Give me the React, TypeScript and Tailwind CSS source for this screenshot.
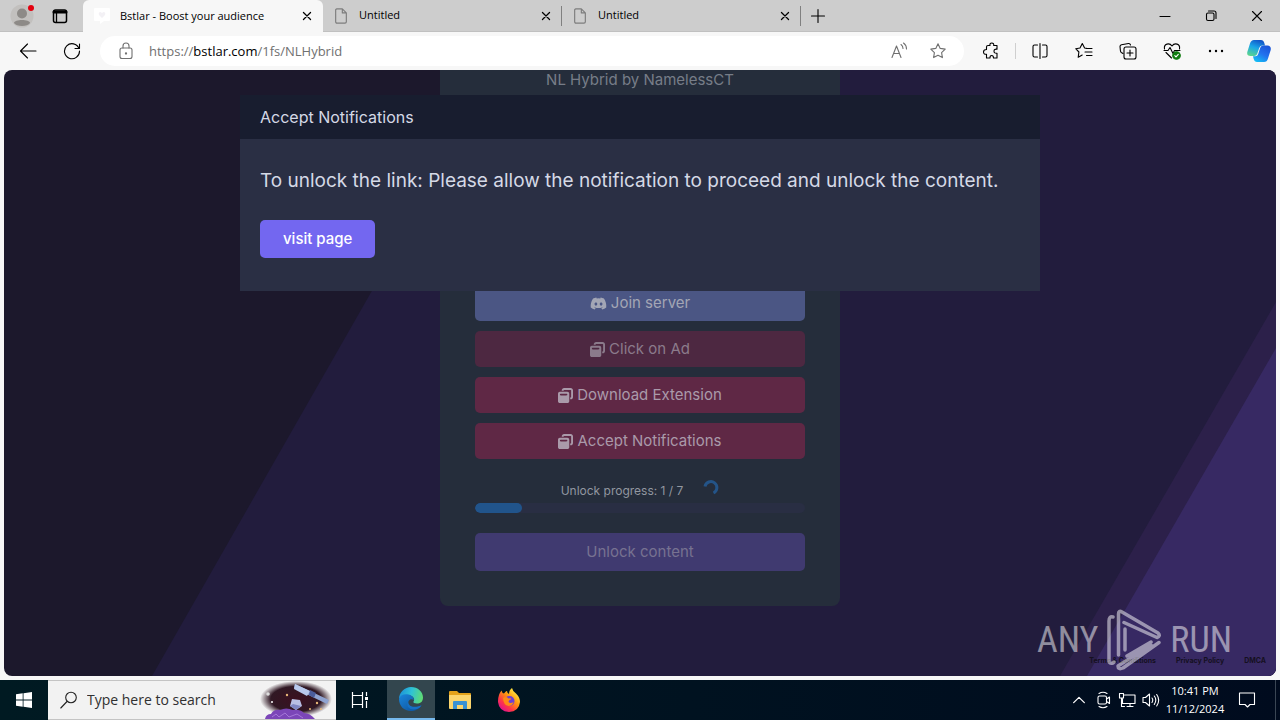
import React, { useState } from "react";
import { FaDiscord, FaWindowRestore } from "react-icons/fa6";

type IconProps = { size?: number; className?: string; children: React.ReactNode };

const Line = ({ size = 18, className = "", children }: IconProps) => (
  <svg
    width={size}
    height={size}
    viewBox="0 0 18 18"
    fill="none"
    stroke="currentColor"
    strokeWidth="1.1"
    strokeLinecap="round"
    strokeLinejoin="round"
    className={`shrink-0 ${className}`}
  >
    {children}
  </svg>
);

const starPath = "M9 1.8l2.2 4.6 5 .7-3.6 3.5.8 5L9 13.200l-4.400 2.400.8-5L1.800 7.100l5-.7z";

const CloseIcon = () => (
  <Line size={16}>
    <path d="M5 5l8 8M13 5l-8 8" strokeWidth="1.400" />
  </Line>
);

const FileIcon = () => (
  <Line size={16} className="text-[#7d7d7d]">
    <path d="M4 1h6.500l4.500 4.500V15.500q0 1.500-1.500 1.500h-9q-1.500 0-1.500-1.500V2.500Q3 1 4.500 1M10.500 1v4.500H15" strokeWidth="1.300" />
  </Line>
);

const tools = [
  {
    id: 1,
    label: "Split screen",
    icon: (
      <Line>
        <path d="M6.500 3H3.500Q2 3 2 4.500v9Q2 15 3.500 15h3M11.500 3h3Q16 3 16 4.500v9q0 1.500-1.500 1.500h-3M9 1.500v15" />
      </Line>
    ),
  },
  {
    id: 2,
    label: "Favorites",
    icon: (
      <Line>
        <path d="M11.500 6.300L9.600 6 7.300 1.600 5 6l-4.300.7 3.200 3.300-.7 5.200 4-2.200M11 6.500h6M10 10h7M11.500 13.500H17" />
      </Line>
    ),
  },
  {
    id: 3,
    label: "Collections",
    icon: (
      <Line>
        <path d="M4 11.500L2.300 10.500Q1.500 10 1.400 8.500L1 4.500Q1 3 2.500 2.700l7-1.200Q11 1.300 11.500 3" />
        <rect x="5" y="5" width="12" height="12" rx="2" />
        <path d="M11 8v6M8 11h6" />
      </Line>
    ),
  },
  {
    id: 4,
    label: "Browser essentials",
    icon: (
      <Line>
        <path d="M1.500 7C.5 1.500 6.500.500 9 4c2.500-3.500 8.500-2.500 7.500 3M1 8.500h4L7 5.500l3 6 1.500-3H17M3 10.500L8.500 16" />
        <circle cx="13.500" cy="13.500" r="3.800" fill="#107c10" stroke="#107c10" />
        <path d="M11.800 13.600l1.200 1.200 2.300-2.500" stroke="white" />
      </Line>
    ),
  },
  {
    id: 5,
    label: "Settings and more",
    icon: (
      <svg width="18" height="18" viewBox="0 0 18 18">
        <circle cx="3" cy="9" r="1.200" />
        <circle cx="9" cy="9" r="1.200" />
        <circle cx="15" cy="9" r="1.200" />
      </svg>
    ),
  },
];

const tasks = [
  { id: 1, label: "Click on Ad", style: "bg-[#4d2841] text-[#8b7b8b]" },
  { id: 2, label: "Download Extension", style: "bg-[#5f2845] text-[#aa9aaa]" },
  { id: 3, label: "Accept Notifications", style: "bg-[#5f2845] text-[#aa9aaa]" },
];

function Tabs() {
  return (
    <header className="flex h-8 items-stretch border-b border-[#c0c0c0] bg-[#cdcdcd] text-[11px] text-black">
      <button aria-label="Profile" className="flex w-11 items-center justify-center">
        <svg width="24" height="24" viewBox="0 0 24 24">
          <circle cx="12" cy="12" r="11.500" fill="#c2c0be" />
          <circle cx="12" cy="9.500" r="5" fill="#8d8a87" />
          <path d="M4 19c0-4 16-4 16 0-2 4-14 4-16 0z" fill="#8d8a87" />
          <circle cx="21" cy="4" r="3" fill="#e3000f" />
        </svg>
      </button>
      <button aria-label="Tab actions" className="mr-[7px] flex w-8 items-center justify-center">
        <Line size={18}>
          <rect x="2.500" y="3" width="13" height="12.500" rx="2" strokeWidth="1.500" />
          <path d="M3 5h12" strokeWidth="3" />
          <path d="M5.500 6v9" strokeWidth="1.300" />
        </Line>
      </button>

      <div className="-mb-px flex w-60 items-center rounded-t-md bg-[#f7f7f7] pl-[11px] pr-2">
        <svg width="16" height="16" viewBox="0 0 16 16" className="mr-[10px] shrink-0">
          <path d="M1 0h14q1 0 1 1v11q0 1-1 1h-5l-4 3v-3H1q-1 0-1-1V1q0-1 1-1z" fill="white" />
          <path d="M8 10L5 7q-1-3 1.500-3L8 5l1.500-1Q12 4 11 7z" fill="#f3f1f5" />
        </svg>
        <span className="flex-1 truncate">Bstlar - Boost your audience</span>
        <button aria-label="Close tab"><CloseIcon /></button>
      </div>
      {[1, 2].map((tab) => (
        <div key={tab} className="flex w-[239px] items-center pl-[10px]">
          <span className="mr-[10px]"><FileIcon /></span>
          <span className="flex-1">Untitled</span>
          <button aria-label="Close tab"><CloseIcon /></button>
          <span className="ml-[7px] h-5 w-px bg-[#808080]" />
        </div>
      ))}
      <button aria-label="New tab" className="flex w-[34px] items-center justify-center">
        <Line><path d="M9 2.500v13M2.500 9h13" /></Line>
      </button>

      <div className="ml-auto flex">
        <button aria-label="Minimize" className="flex w-[46px] items-center justify-center">
          <Line><path d="M4 9.500h10" /></Line>
        </button>
        <button aria-label="Restore" className="flex w-[46px] items-center justify-center">
          <Line>
            <rect x="4.500" y="6" width="7.500" height="7.500" rx="1.500" />
            <path d="M6.500 4h5.500q2 0 2 2v5.500" />
          </Line>
        </button>
        <button aria-label="Close" className="flex w-[46px] items-center justify-center">
          <Line><path d="M4.500 4.500l9 9M13.500 4.500l-9 9" /></Line>
        </button>
      </div>
    </header>
  );
}

function Toolbar() {
  const [editing, setEditing] = useState<boolean>(false);
  return (
    <div className="flex h-[38px] items-center bg-[#f7f7f7] pl-1.5 text-black">
      <button aria-label="Back" className="flex w-11 justify-center">
        <Line><path d="M17 9H1.500M8.500 2L1.500 9l7 7" /></Line>
      </button>
      <button aria-label="Refresh" className="flex w-11 justify-center">
        <Line><path d="M16 6.500A7.500 7.500 0 1 0 16.500 9M16.500 2v4.500H12" /></Line>
      </button>

      <div className="relative ml-1.5 mr-[5px] flex h-[30px] flex-1 items-center rounded-full bg-white pl-[17px] pr-[17px] text-[#707070]">
        <Line>
          <rect x="3" y="6" width="12" height="10.500" rx="2" />
          <path d="M6 6V4q0-3 3-3t3 3v2" />
          <circle cx="9" cy="11.500" r=".6" fill="currentColor" />
        </Line>
        {!editing && (
          <label htmlFor="address" className="pointer-events-none absolute left-[49px] text-[13px] leading-5">
            https://<span className="text-black">bstlar.com</span>/1fs/NLHybrid
          </label>
        )}
        <input
          id="address"
          aria-label="Address"
          className="ml-[14px] min-w-0 flex-1 bg-transparent text-[13px] outline-none"
          value={editing ? "https://bstlar.com/1fs/NLHybrid" : ""}
          onFocus={() => setEditing(true)}
          onBlur={() => setEditing(false)}
          readOnly
        />
        <button aria-label="Read aloud" className="mr-[21px]">
          <Line>
            <path d="M2 15.500L6.500 4 11 15.500M3.500 11.500h6M11 2.500q2 1.500 2 4M13.500 1q3 2 3 6" />
          </Line>
        </button>
        <button aria-label="Add to favorites">
          <Line><path d={starPath} /></Line>
        </button>
      </div>

      <button aria-label="Extensions" className="flex w-11 justify-center">
        <Line>
          <path d="M6 3.500h2Q7.500 1 9.800 1t1.900 2.500H15v3.700q-3-.3-3 2t3 2V16h-3.500Q11.500 13.500 9.700 13.500T8 16H4.500v-3.700Q1.500 12.500 1.500 10T4.500 7.500v-2.500q0-1.500 1.500-1.500z" />
        </Line>
      </button>
      <span className="mx-0.5 h-4 w-px bg-[#cfcfcf]" />
      {tools.map((tool) => (
        <button key={tool.id} aria-label={tool.label} className="flex w-11 justify-center">
          {tool.icon}
        </button>
      ))}
      <button aria-label="Copilot" className="flex w-[42px] justify-center">
        <svg width="24" height="22" viewBox="0 0 24 22">
          <defs>
            <linearGradient id="cpA" x1="0.600" y1="0" x2="0.200" y2="1">
              <stop offset="0" stopColor="#1256c8" />
              <stop offset=".45" stopColor="#1aa5e8" />
              <stop offset="1" stopColor="#5cd68c" />
            </linearGradient>
            <linearGradient id="cpB" x1="0.800" y1="0" x2="0.200" y2="1">
              <stop offset="0" stopColor="#1a53d8" />
              <stop offset=".5" stopColor="#2272ee" />
              <stop offset="1" stopColor="#14c0f5" />
            </linearGradient>
          </defs>
          <path d="M7 0h7q2.500 0 3.300 3l.7 2.500h-3q-2 0-2.800 2.500L10.500 13q-.8 3-3.500 3H3.500Q-.5 16 .3 12L3 3.500Q4 0 7 0z" fill="url(#cpA)" />
          <path d="M17 22h-7q-2.500 0-3.300-3L6 16.300h2.500q2 0 2.800-2.500L13 8.500q.8-3 3.500-3h4Q24.500 6 23.700 10L21 18.500Q20 22 17 22z" fill="url(#cpB)" />
        </svg>
      </button>
    </div>
  );
}

function UnlockCard() {
  return (
    <section className="relative mx-auto w-full max-w-[400px] rounded-b-lg bg-[#252d3b] px-[35px] pb-[35px] text-center text-[15px]">
      <h1 className="leading-5 text-[#777d88]">NL Hybrid by NamelessCT</h1>

      {/* TASKS */}

      <div className="mt-[195px] flex flex-col gap-[10px]">
        <button className="flex h-9 items-center justify-center gap-1 rounded-[5px] bg-[#4b5684] text-[#a3a6b5]">
          <FaDiscord size={17} />Join server
        </button>
        {tasks.map((task) => (
          <button key={task.id} className={`flex h-9 items-center justify-center gap-1 rounded-[5px] ${task.style}`}>
            <FaWindowRestore size={15} />{task.label}
          </button>
        ))}
      </div>

      {/* PROGRESS */}

      <div className="mt-5 flex h-6 items-center justify-center gap-5 text-xs text-[#9297a0]">
        <span>Unlock progress: 1 / 7</span>
        <svg width="16" height="16" viewBox="0 0 16 16" fill="none" stroke="#245488" strokeWidth="3" className="self-start">
          <path d="M2 7.500A6 6 0 1 1 10.500 14" />
        </svg>
      </div>
      <div className="h-[10px] overflow-hidden rounded-full bg-[#292e43]">
        <div className="h-full w-1/7 rounded-full bg-[#21548b]" />
      </div>
      <button className="mt-5 h-[38px] w-full rounded-[5px] bg-[#403a70] text-[#777291]">Unlock content</button>
    </section>
  );
}

function Modal() {
  return (
    <div role="dialog" aria-labelledby="modal-title" className="absolute inset-x-0 top-[25px] mx-auto max-w-[800px] bg-[#2a2f44] text-[#d5d9e6]">
      <h2 id="modal-title" className="bg-[#181d2f] px-5 py-3 text-base leading-5">Accept Notifications</h2>
      <div className="px-5 pb-[33px] pt-7">
        <p className="text-[19px] leading-7">
          To unlock the link: Please allow the notification to proceed and unlock the content.
        </p>
        <button className="mt-[25px] h-[38px] rounded-[5px] bg-[#7367f0] px-[23px] text-[15px] font-medium text-white">
          visit page
        </button>
      </div>
    </div>
  );
}

function Watermark() {
  return (
    <div className="pointer-events-none absolute bottom-[5px] right-11 flex items-center gap-2 font-['Roboto_Condensed','Liberation_Sans_Narrow','Liberation_Sans',sans-serif] text-[36px] leading-10 text-white/50">
      <span>ANY</span>
      <svg width="56" height="62" viewBox="0 0 56 62" fill="none" stroke="currentColor" strokeWidth="3.500" strokeLinecap="round" strokeLinejoin="round">
        <path d="M7 8Q3 7 3 12V52Q3 55 7 54L8 53M12.500 46V5Q12.500 1 16 3L52 24Q55 27 51 28.500L18 13.500M21 47L45 33M53 33.500L17 59Q12 61 12 57L45 36" />
        <path d="M19 20V41" />
      </svg>
      <span>RUN</span>
    </div>
  );
}

function Taskbar() {
  return (
    <footer className="flex h-10 items-stretch bg-linear-to-r from-[#001a22] to-[#000b1e] text-white">
      <button aria-label="Start" className="flex w-12 items-center justify-center">
        <svg width="16" height="16" viewBox="0 0 16 16" fill="white">
          <path d="M0 2.300L6.700 1.300V7.600H0zM7.500 1.200L16 0v7.600H7.500zM0 8.400h6.700v6.400L0 13.800zM7.500 8.400H16V16l-8.500-1.200z" />
        </svg>
      </button>
      <div className="relative flex w-72 items-center overflow-hidden border-y border-[#c4c4c4] bg-[#f2f2f2] pl-3 text-[#222]">
        <Line size={18}>
          <circle cx="11" cy="6.500" r="5.300" />
          <path d="M7 10.500L.8 17" />
        </Line>
        <input
          aria-label="Search"
          placeholder="Type here to search"
          className="ml-[9px] min-w-0 flex-1 bg-transparent text-sm text-black outline-none placeholder:text-[#303030]"
        />
        <svg width="76" height="38" viewBox="0 0 76 38" className="shrink-0">
          <defs>
            <radialGradient id="sky">
              <stop offset="0" stopColor="#3b1020" />
              <stop offset=".7" stopColor="#301824" />
              <stop offset="1" stopColor="#301824" stopOpacity="0" />
            </radialGradient>
          </defs>
          <ellipse cx="36" cy="18" rx="36" ry="18" fill="url(#sky)" />
          <path d="M5 38q1-5 6-5 3-5 9-4 6-3 13 0 7-1 11 3 6 0 11 6z" fill="#7b46b8" />
          <path d="M12 36l4-3 3 3 6-4 4 4 8-3 6 4" stroke="#a578d8" fill="none" />
          <path d="M35 3l34 16-2 4L34 7z" fill="#8fa3d0" />
          <path d="M35 3l15 7-3 5-13-7z" fill="#b8c9ec" />
          <path d="M50 9l6 3-2 5-5-3z" fill="#4a5c9b" />
          <path d="M32 18l8 1 2 6-6 4-6-4z" fill="#b9bfe4" />
          <path d="M33 23l8 2-5 4-6-4z" fill="#7f86c3" />
          <g fill="#e8b878">
            <circle cx="27" cy="14" r="1.200" />
            <circle cx="12" cy="21" r="1" fill="#fff" />
            <circle cx="8" cy="13" r="1.800" fill="#ddd" />
            <circle cx="57" cy="22" r="1.200" />
            <circle cx="61" cy="28" r="1" />
            <circle cx="50" cy="28" r="1" />
          </g>
        </svg>
      </div>

      <button aria-label="Task view" className="flex w-[51px] items-center justify-center pr-1">
        <svg width="18" height="18" viewBox="0 0 18 18" fill="none" stroke="white" strokeWidth="1.200">
          <path d="M1.500 1v3.500h10V1M1.500 17v-3.500h10V17M1.500 4.500v9M11.500 4.500v9M15.500 1v4M15.500 10v7" />
          <path d="M14 6h3v3h-3z" fill="white" stroke="none" />
        </svg>
      </button>
      <button aria-label="Microsoft Edge" className="flex w-12 items-center justify-center border-b-2 border-[#76b9ed] bg-[#33464e]">
        <svg width="24" height="24" viewBox="0 0 24 24">
          <defs>
            <linearGradient id="edgeTop" x1="0" y1="0.300" x2="1" y2="0.500">
              <stop offset="0" stopColor="#1b8fd8" />
              <stop offset=".5" stopColor="#2fc2d6" />
              <stop offset="1" stopColor="#5fdc74" />
            </linearGradient>
            <linearGradient id="edgeLow" x1="0" y1="0" x2="1" y2="1">
              <stop offset="0" stopColor="#1a86dc" />
              <stop offset="1" stopColor="#0d4d94" />
            </linearGradient>
          </defs>
          <path d="M0 12C0 5 6 0 12 0c7 0 12 5 12 10.500 0 4.500-3 6-6 6-2.500 0-4.200-1-3.500-2 1.500-2 .5-5.500-4.500-6.500C6 7.500 1.500 8.500 0 12z" fill="url(#edgeTop)" />
          <path d="M0 12C1 8 5 6.500 9.500 7.500c3 .8 5.500 3 5.300 5.500-3.300-2-6.800 1-5.300 5 1.500 3 7 4 13 0C20.500 22 16 24 12 24 5 24 0 19 0 12z" fill="url(#edgeLow)" />
          <path d="M9.300 13c-1 5 3 9 13.200 5.500-2 3-5.500 4-8 4-5 0-8-4.500-5.200-9.500z" fill="#1670c4" />
        </svg>
      </button>
      <button aria-label="File Explorer" className="flex w-[49px] items-center justify-center">
        <svg width="22" height="18" viewBox="0 0 22 18">
          <path d="M0 1q0-1 1-1h7l2 2h11q1 0 1 1v5H0z" fill="#e3a21a" />
          <path d="M0 4h22v13q0 1-1 1H1q-1 0-1-1z" fill="#fbd56d" />
          <path d="M4 18v-7q0-1 1-1h12q1 0 1 1v7h-4v-4H8v4z" fill="#3a92d4" />
        </svg>
      </button>
      <button aria-label="Firefox" className="flex w-[49px] items-center justify-center">
        <svg width="24" height="24" viewBox="0 0 24 24">
          <defs>
            <linearGradient id="fox" x1="0.850" y1="0.100" x2="0.200" y2="0.900">
              <stop offset="0" stopColor="#fff24a" />
              <stop offset=".4" stopColor="#ff980e" />
              <stop offset=".75" stopColor="#ff3647" />
              <stop offset="1" stopColor="#e31587" />
            </linearGradient>
          </defs>
          <path d="M4.500 2.500Q5 5 7 5.500 9 2.500 10 3q0 2 2 3 0-4 3-6 .5 3 4 5.500 4 4 4 8.500-1 9.500-11 10Q2 23.500 1 14 .8 7 4.500 2.500z" fill="url(#fox)" />
          <circle cx="12.500" cy="13" r="5" fill="#6b3fd6" />
          <path d="M6 10q3-2 5.500.5 2.500-.5 3 .5-3 1-3 3 2 2 5 0-1 4-5 4-5-.5-5.500-8z" fill="#ff8a16" />
        </svg>
      </button>

      {/* TRAY */}

      <div className="ml-auto flex items-center">
        <button aria-label="Show hidden icons" className="flex w-6 justify-center">
          <Line size={16}><path d="M3 12l6-6 6 6" strokeWidth="1.400" /></Line>
        </button>
        <button aria-label="Meet now" className="flex w-6 justify-center">
          <Line size={18}>
            <path d="M5 2.500q4-2.500 8 0M5 15.500q4 2.500 8 0M12.500 8l3-2v6.500l-3-2" />
            <rect x="4" y="5" width="8.500" height="8" rx="1.500" />
          </Line>
        </button>
        <button aria-label="Network" className="flex w-6 justify-center">
          <Line size={18}>
            <path d="M6.500 4H17v8.500H4.500V8M9 15.500h6M12 12.500v3M1.500 2.500h4V7h-4zM3.500 7v8.500h3" />
          </Line>
        </button>
        <button aria-label="Volume" className="flex w-6 justify-center">
          <Line size={18}>
            <path d="M1 6.500h2.500L7.500 3v12l-4-3.500H1zM10 7q1.500 2 0 4.500M12.300 5q3 4 0 8.500M14.700 3.500q4 5.500 0 11.500" />
          </Line>
        </button>
        <div className="flex w-16 flex-col items-center text-[11px] leading-[18px]">
          <span className="whitespace-nowrap">10:41 PM</span>
          <span className="whitespace-nowrap">11/12/2024</span>
        </div>
        <button aria-label="Notifications" className="flex w-10 justify-center">
          <Line size={18}><path d="M1.500 2h15v11.500H12L9.500 16 7 13.500H1.500z" /></Line>
        </button>
        <span className="ml-2 mr-1 h-10 w-px bg-[#3a4654]" />
      </div>
    </footer>
  );
}

export default function App() {
  return (
    <div className="flex min-h-screen flex-col bg-[#f7f7f7] font-['Open_Sans','Noto_Sans',sans-serif]">
      <Tabs />
      <Toolbar />

      <main className="relative mx-1 mb-1 flex-1 overflow-hidden rounded-lg bg-[#1c182c] pb-[70px] font-[Inter,sans-serif]">
        <svg className="absolute inset-0 h-full w-full" viewBox="0 0 1272 606" preserveAspectRatio="none">
          <path d="M148 606L494 0H1272V606z" fill="#221c3d" />
          <path d="M1056 606L1272 232V606z" fill="#2c204a" />
          <path d="M1083 606L1272 278V606z" fill="#372963" />
        </svg>
        <UnlockCard />
        <nav className="absolute bottom-[10px] right-[10px] flex gap-5 text-[7px] font-bold leading-[10px] text-[#15101f]">
          <a href="#terms">Terms &amp; Conditions</a>
          <a href="#privacy">Privacy Policy</a>
          <a href="#dmca">DMCA</a>
        </nav>
        <Modal />
        <Watermark />
      </main>

      <Taskbar />
    </div>
  );
}
